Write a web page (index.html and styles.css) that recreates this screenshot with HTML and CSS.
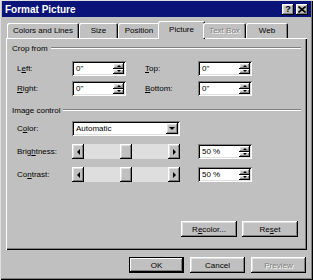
FILE: index.html
```html
<!DOCTYPE html>
<html lang="en">
<head>
    <meta charset="UTF-8">
    <title>Format Picture</title>
    <link rel="stylesheet" href="styles.css">
</head>
<body>
    <div class="dialog">
        <div class="titlebar">
            <span class="title">Format Picture</span>
            <div class="title-btns">
                <span class="tbtn raised">?</span>
                <span class="tbtn raised">
                    <svg width="8" height="7" viewBox="0 0 8 7">
                        <path d="M0.5 0.5 L7.5 6.5 M7.5 0.5 L0.5 6.5" stroke="#000" stroke-width="1.6"/>
                    </svg>
                </span>
            </div>
        </div>

        <div class="tabs">
            <div class="tab" style="width: 72px">Colors and Lines</div>
            <div class="tab" style="width: 39px">Size</div>
            <div class="tab" style="width: 42px">Position</div>
            <div class="tab active" style="width: 47px">Picture</div>
            <div class="tab disabled" style="width: 43px">Text Box</div>
            <div class="tab" style="width: 42px">Web</div>
        </div>

        <div class="panel">
            <div class="group-head"><span>Crop from</span><div class="etch"></div></div>

            <div class="row">
                <label class="lbl">L<u>e</u>ft:</label>
                <div class="spin sunken">
                    <span class="val">0"</span>
                    <div class="spin-btns"><span class="sb up raised"></span><span class="sb down raised"></span></div>
                </div>
                <label class="lbl lbl-r"><u>T</u>op:</label>
                <div class="spin sunken">
                    <span class="val">0"</span>
                    <div class="spin-btns"><span class="sb up raised"></span><span class="sb down raised"></span></div>
                </div>
            </div>

            <div class="row row-2">
                <label class="lbl"><u>R</u>ight:</label>
                <div class="spin sunken">
                    <span class="val">0"</span>
                    <div class="spin-btns"><span class="sb up raised"></span><span class="sb down raised"></span></div>
                </div>
                <label class="lbl lbl-r"><u>B</u>ottom:</label>
                <div class="spin sunken">
                    <span class="val">0"</span>
                    <div class="spin-btns"><span class="sb up raised"></span><span class="sb down raised"></span></div>
                </div>
            </div>

            <div class="group-head group-2"><span>Image control</span><div class="etch"></div></div>

            <div class="row row-color">
                <label class="lbl">C<u>o</u>lor:</label>
                <div class="combo sunken">
                    <span class="val">Automatic</span>
                    <span class="drop raised"><i class="tri-down"></i></span>
                </div>
            </div>

            <div class="row row-slider">
                <label class="lbl">Brig<u>h</u>tness:</label>
                <div class="slider">
                    <span class="arrow raised"><i class="tri-left"></i></span>
                    <span class="track" style="width: 36px"></span>
                    <span class="thumb raised"></span>
                    <span class="track grow"></span>
                    <span class="arrow raised"><i class="tri-right"></i></span>
                </div>
                <div class="spin sunken pct">
                    <span class="val">50 %</span>
                    <div class="spin-btns"><span class="sb up raised"></span><span class="sb down raised"></span></div>
                </div>
            </div>

            <div class="row row-slider">
                <label class="lbl">Co<u>n</u>trast:</label>
                <div class="slider">
                    <span class="arrow raised"><i class="tri-left"></i></span>
                    <span class="track" style="width: 36px"></span>
                    <span class="thumb raised"></span>
                    <span class="track grow"></span>
                    <span class="arrow raised"><i class="tri-right"></i></span>
                </div>
                <div class="spin sunken pct">
                    <span class="val">50 %</span>
                    <div class="spin-btns"><span class="sb up raised"></span><span class="sb down raised"></span></div>
                </div>
            </div>

            <div class="panel-btns">
                <button class="btn raised">R<u>e</u>color...</button>
                <button class="btn raised">Re<u>s</u>et</button>
            </div>
        </div>

        <div class="actions">
            <button class="btn raised default">OK</button>
            <button class="btn raised">Cancel</button>
            <button class="btn raised disabled">Preview</button>
        </div>
    </div>
</body>
</html>
```

FILE: styles.css
```css
/* classic gray dialog */
body {
  margin: 0;
  background: #c0c0c0;
  font-family: 'Liberation Sans', Arial, sans-serif;
  font-size: 8px;
  color: #000;
}

.dialog {
  width: 313px;
  height: 280px;
  box-sizing: border-box;
  padding: 1px 2px;
  background: #c0c0c0;
  box-shadow: inset 1px 1px #dfdfdf, inset -1px -1px #000, inset -2px -2px #808080;
}

.raised {
  background: #c0c0c0;
  box-shadow: inset -1px -1px #000, inset 1px 1px #fff, inset -2px -2px #808080, inset 2px 2px #dfdfdf;
}

.sunken {
  background: #fff;
  box-shadow: inset 1px 1px #808080, inset -1px -1px #fff, inset 2px 2px #000, inset -2px -2px #dfdfdf;
}

/* title bar */
.titlebar {
  height: 16px;
  background: #0a1478;
  display: flex;
  align-items: center;
  justify-content: space-between;
  padding: 0 3px 0 3px;
}

.title {
  color: #fff;
  font-weight: bold;
  font-size: 10px;
}

.title-btns {
  display: flex;
  gap: 2px;
}

.tbtn {
  width: 12px;
  height: 11px;
  display: flex;
  align-items: center;
  justify-content: center;
  font-weight: bold;
  font-size: 9px;
}

/* tabs */
.tabs {
  display: flex;
  align-items: flex-end;
  height: 17px;
  margin-top: 4px;
  padding-left: 5px;
  position: relative;
  z-index: 1;
}

.tab {
  height: 15px;
  box-sizing: border-box;
  display: flex;
  align-items: center;
  justify-content: center;
  border-radius: 2px 2px 0 0;
  box-shadow: inset 1px 1px #fff, inset -1px 0 #000, inset -2px 0 #808080;
  white-space: nowrap;
  background: #c0c0c0;
}

.tab.active {
  height: 18px;
  margin: 0 -2px -1px;
  padding-bottom: 2px;
}

.tab.disabled {
  color: #808080;
  text-shadow: 1px 1px #fff;
}

/* page panel */
.panel {
  width: 301px;
  height: 212px;
  margin-left: 4px;
  box-sizing: border-box;
  padding-top: 5px;
  box-shadow: inset 1px 1px #fff, inset -1px -1px #000, inset -2px -2px #808080;
  display: flex;
  flex-direction: column;
}

.group-head {
  height: 10px;
  display: flex;
  align-items: center;
  gap: 3px;
  padding: 0 6px;
}

.group-2 {
  margin-top: 9px;
}

.etch {
  flex: 1;
  height: 0;
  border-top: 1px solid #808080;
  border-bottom: 1px solid #fff;
}

.row {
  display: flex;
  align-items: center;
  height: 15px;
  margin-top: 8px;
  padding-left: 11px;
}

.row-2 {
  margin-top: 5px;
}

.row-color {
  margin-top: 6px;
}

.lbl {
  width: 55px;
}

.lbl-r {
  margin-left: 19px;
  width: 53px;
}

.spin {
  width: 54px;
  height: 15px;
  display: flex;
  box-sizing: border-box;
  padding: 2px;
}

.val {
  flex: 1;
  line-height: 11px;
  padding-left: 2px;
}

.spin-btns {
  width: 11px;
  display: flex;
  flex-direction: column;
}

.sb {
  flex: 1;
  display: flex;
  align-items: center;
  justify-content: center;
}

.sb::after {
  content: '';
  border-left: 2px solid transparent;
  border-right: 2px solid transparent;
}

.sb.up::after {
  border-bottom: 2px solid #000;
}

.sb.down::after {
  border-top: 2px solid #000;
}

.combo {
  width: 108px;
  height: 15px;
  box-sizing: border-box;
  padding: 2px;
  display: flex;
}

.drop {
  width: 12px;
  display: flex;
  align-items: center;
  justify-content: center;
}

.tri-down {
  border-left: 3px solid transparent;
  border-right: 3px solid transparent;
  border-top: 3px solid #000;
}

.slider {
  width: 108px;
  height: 15px;
  display: flex;
  background: #dedede;
}

.arrow {
  width: 12px;
  display: flex;
  align-items: center;
  justify-content: center;
}

.tri-left {
  border-top: 3px solid transparent;
  border-bottom: 3px solid transparent;
  border-right: 3px solid #000;
}

.tri-right {
  border-top: 3px solid transparent;
  border-bottom: 3px solid transparent;
  border-left: 3px solid #000;
}

.thumb {
  width: 12px;
}

.track.grow {
  flex: 1;
}

.pct {
  margin-left: 18px;
}

.panel-btns {
  display: flex;
  justify-content: flex-end;
  gap: 5px;
  padding-right: 9px;
  margin-top: 39px;
}

.btn {
  width: 56px;
  height: 16px;
  border: 0;
  padding: 0;
  font-family: inherit;
  font-size: 8px;
  color: #000;
}

.btn.default {
  box-shadow: inset 0 0 0 1px #000, inset -2px -2px #000, inset 2px 2px #fff, inset -3px -3px #808080;
}

.btn.disabled {
  color: #808080;
  text-shadow: 1px 1px #fff;
}

.actions {
  display: flex;
  justify-content: flex-end;
  gap: 6px;
  margin-top: 7px;
  padding-right: 5px;
}

.actions .btn {
  width: 55px;
}
```
